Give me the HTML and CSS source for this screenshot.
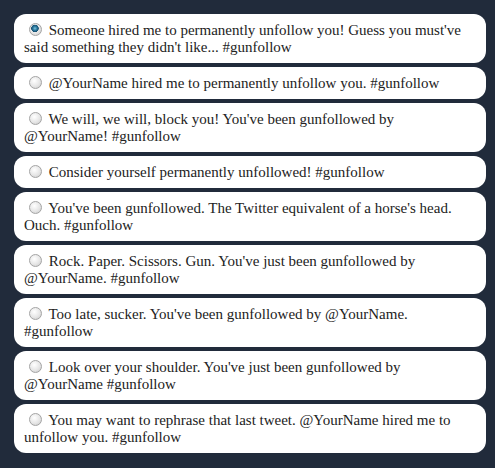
FILE: index.html
```html
<!DOCTYPE html>
<html>
<head>
<meta charset="utf-8">
<link rel="stylesheet" href="styles.css">
</head>
<body>
<div class="page">
  <form class="options">
    <label class="option"><input type="radio" name="msg" checked> Someone hired me to permanently unfollow you! Guess you must've said something they didn't like... #gunfollow</label>
    <label class="option"><input type="radio" name="msg"> @YourName hired me to permanently unfollow you. #gunfollow</label>
    <label class="option"><input type="radio" name="msg"> We will, we will, block you! You've been gunfollowed by @YourName! #gunfollow</label>
    <label class="option"><input type="radio" name="msg"> Consider yourself permanently unfollowed! #gunfollow</label>
    <label class="option"><input type="radio" name="msg"> You've been gunfollowed. The Twitter equivalent of a horse's head. Ouch. #gunfollow</label>
    <label class="option"><input type="radio" name="msg"> Rock. Paper. Scissors. Gun. You've just been gunfollowed by @YourName. #gunfollow</label>
    <label class="option"><input type="radio" name="msg"> Too late, sucker. You've been gunfollowed by @YourName. #gunfollow</label>
    <label class="option"><input type="radio" name="msg"> Look over your shoulder. You've just been gunfollowed by @YourName #gunfollow</label>
    <label class="option"><input type="radio" name="msg"> You may want to rephrase that last tweet. @YourName hired me to unfollow you. #gunfollow</label>
  </form>
</div>
</body>
</html>
```

FILE: styles.css
```css
html, body {
  margin: 0;
  padding: 0;
  background: #212b3b;
}
.page {
  padding: 14px 9px 0 14px;
}
.options {
  display: flex;
  flex-direction: column;
  gap: 4px;
  margin: 0;
}
.option {
  display: block;
  background: #ffffff;
  border-radius: 12px;
  padding: 8px 10px 7px;
  font-family: "Liberation Serif", "Times New Roman", serif;
  font-size: 15px;
  line-height: 17px;
  color: #222222;
}
.option input {
  -webkit-appearance: none;
  appearance: none;
  width: 13px;
  height: 13px;
  margin: 0 3px 0 5px;
  border-radius: 50%;
  border: 1px solid #a4a4a4;
  background: radial-gradient(circle at 40% 35%, #ffffff 0%, #e6e6e6 55%, #c8c8c8 100%);
  box-sizing: border-box;
  vertical-align: -1px;
}
.option input:checked {
  background:
    radial-gradient(circle at 45% 40%, #7fc4dc 0px, #2c7aa0 2px, #154e6e 3.5px, transparent 4px),
    radial-gradient(circle at 40% 35%, #ffffff 0%, #e6e6e6 55%, #c8c8c8 100%);
}
```
